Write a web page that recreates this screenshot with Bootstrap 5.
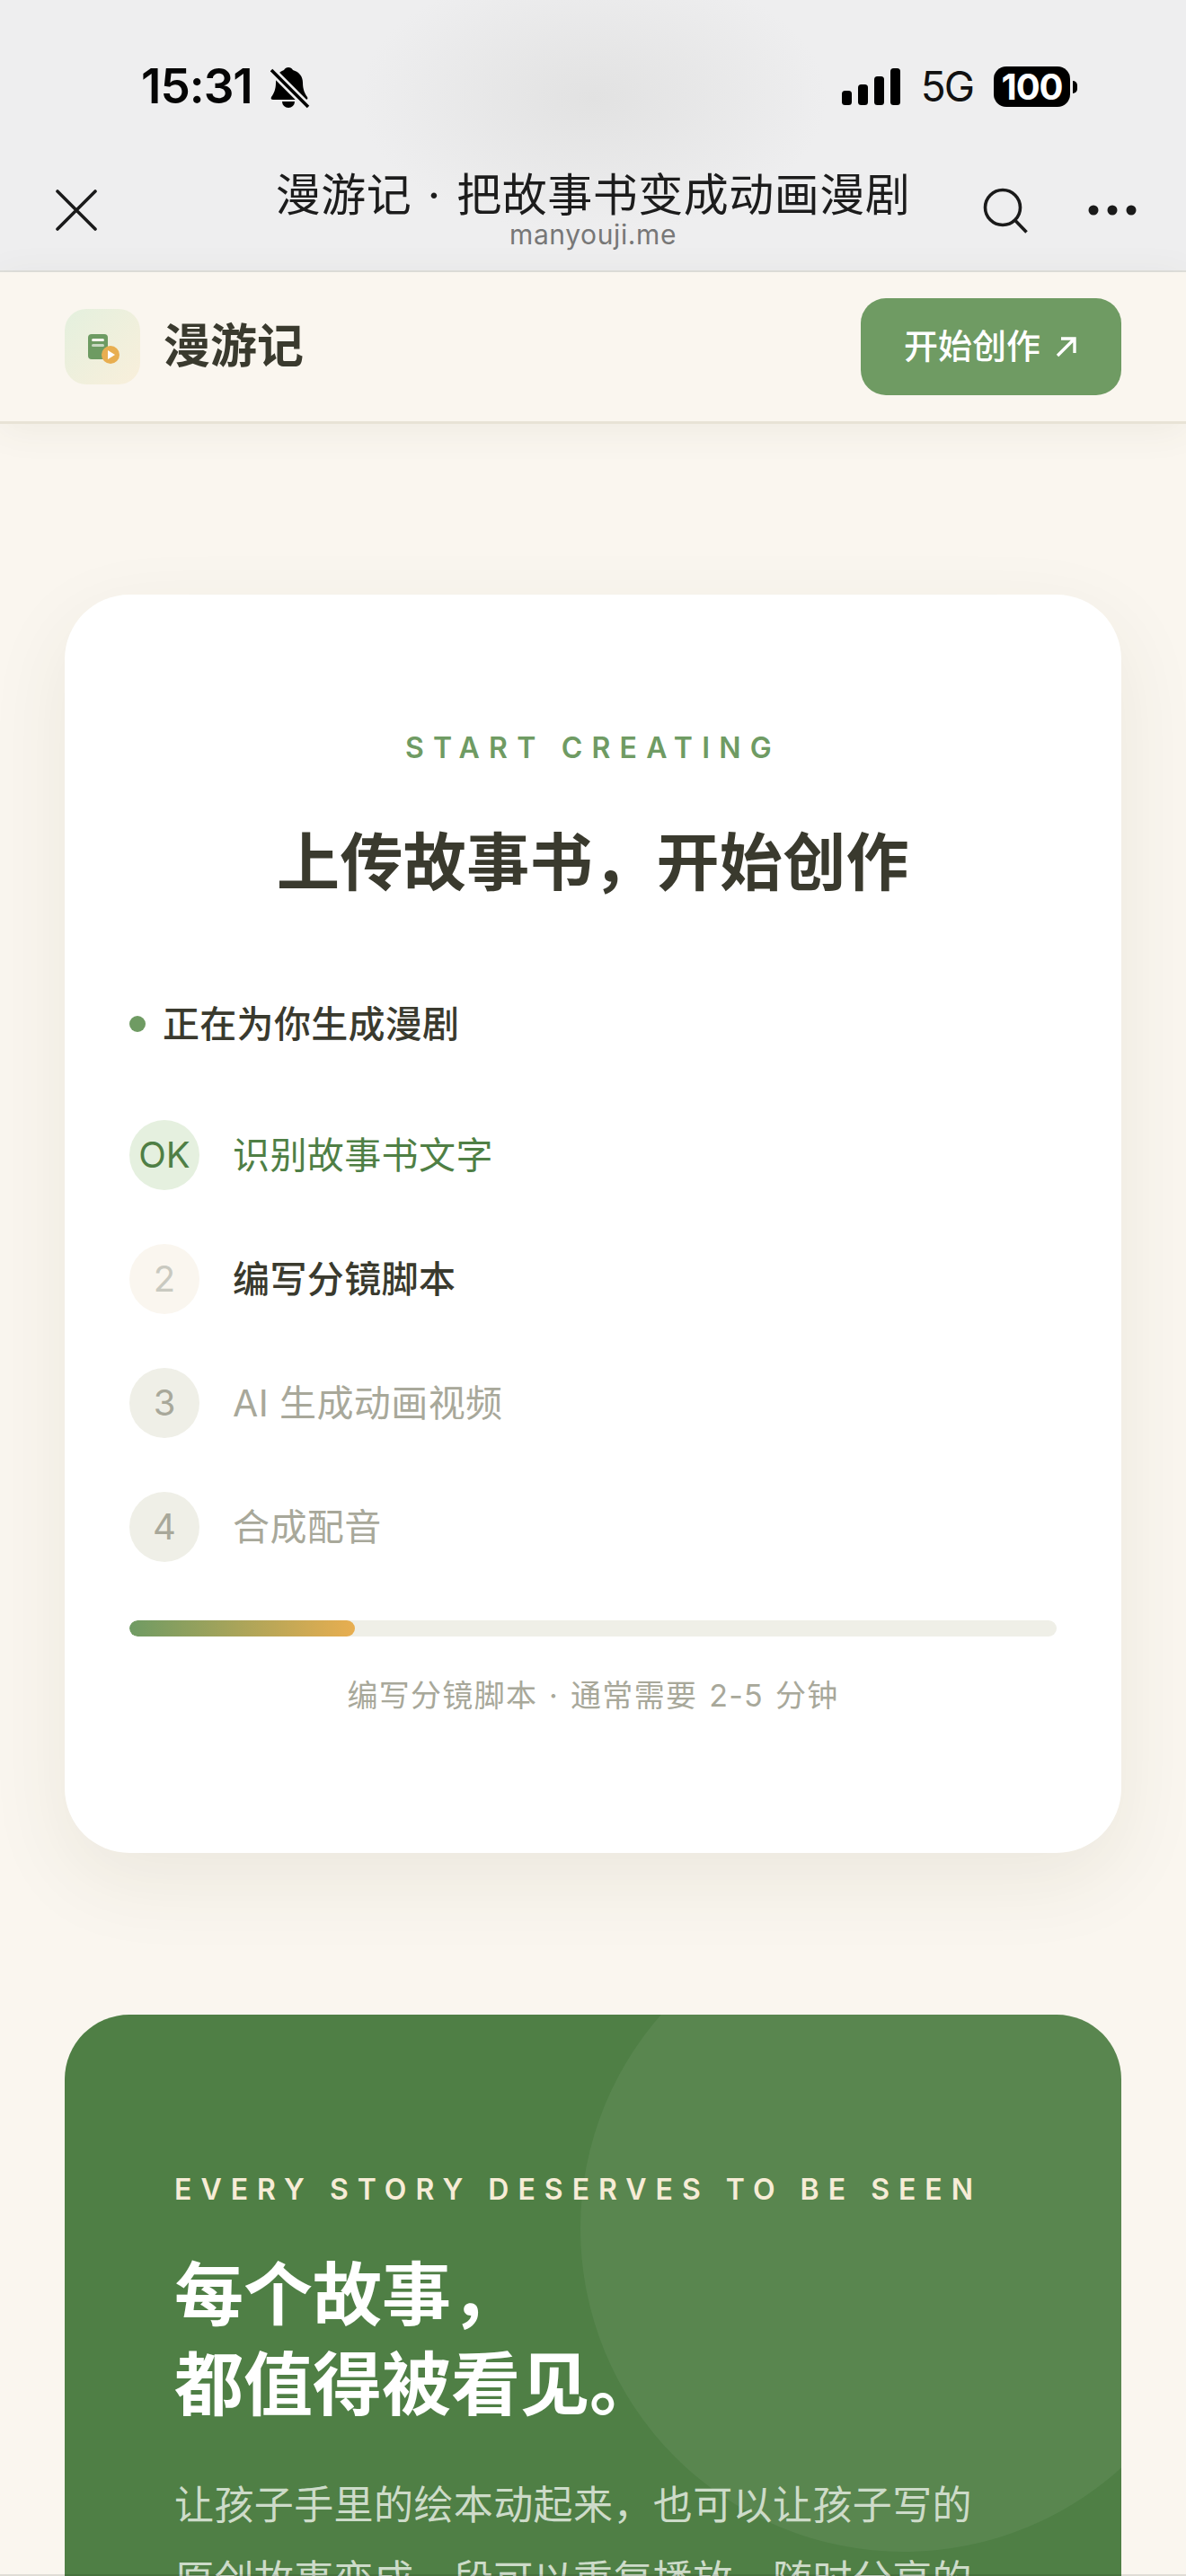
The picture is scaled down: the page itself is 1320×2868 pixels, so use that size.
<!DOCTYPE html>
<html lang="zh-CN">
<head>
    <meta charset="UTF-8"/>
    <title>漫游记</title>
    <link rel="stylesheet" href="https://cdn.jsdelivr.net/npm/bootstrap@5.3.0/dist/css/bootstrap.min.css">
    <style>
        html, body {
            height: 2868px;
            overflow: hidden;
        }

        body {
            background: #faf6ef;
            font-family: Inter, "Noto Sans CJK SC", sans-serif;
            color: #3a3a2e;
        }

        /* Phone chrome */
        .chrome-top {
            height: 303px;
            border-bottom: 2px solid #dfdfdb;
            background: radial-gradient(ellipse 260px 150px at 660px 110px, #e2e2e2, rgba(238, 238, 239, 0)), #eeeeef;
            color: #111;
        }

        .status-row {
            padding: 74px 121px 0 157px;
            height: 119px;
        }

        .status-time {
            font-size: 53px;
            font-weight: 600;
            line-height: 45px;
            letter-spacing: -1px;
            color: #050505;
        }

        .bell-icon {
            margin: 1px 0 0 20px;
        }

        .signal-icon {
            margin-top: 2px;
        }

        .status-net {
            font-size: 46px;
            line-height: 45px;
            letter-spacing: -2px;
            margin: 0 23px 0 23px;
        }

        .battery-body {
            width: 85px;
            height: 45px;
            border-radius: 14px;
            background: #000;
            color: #fff;
            font-size: 40px;
            font-weight: 700;
            line-height: 45px;
            letter-spacing: -1px;
            text-align: center;
        }

        .battery-nub {
            width: 5px;
            height: 14px;
            margin-left: 3px;
            background: #000;
            border-radius: 0 7px 7px 0;
        }

        .wx-nav {
            display: grid;
            grid-template-columns: 1fr auto 1fr;
            padding: 0 62px;
            height: 182px;
        }

        .close-icon {
            margin-top: 92px;
        }

        .wx-title {
            font-size: 50px;
            line-height: 50px;
            letter-spacing: .5px;
            word-spacing: 3px;
            margin-top: 73px;
            color: #1c1c1c;
            font-weight: 400;
        }

        .wx-domain {
            font-size: 30px;
            line-height: 36px;
            letter-spacing: .6px;
            color: #777;
            margin-top: 1px;
        }

        .wx-right {
            margin-right: -7px;
            padding-top: 90px;
            gap: 67px;
        }

        .dots-icon {
            margin-top: 19px;
        }

        /* Site header */
        .site-head {
            height: 169px;
            padding: 0 72px 1px;
            background: #faf6ef;
            border-bottom: 3px solid #e8e3d6;
            box-shadow: 0 6px 40px rgba(90, 80, 50, .07);
        }

        .logo-tile {
            width: 84px;
            height: 84px;
            border-radius: 24px;
            background: linear-gradient(135deg, #e4f0de, #f9efdb);
        }

        .brand-name {
            font-size: 52px;
            font-weight: 700;
            margin-left: 26px;
            color: #3a3a2e;
        }

        .btn-create {
            width: 290px;
            height: 108px;
            border-radius: 28px;
            background: #6f9b63;
            border: 0;
            color: #fff;
            font-size: 38px;
            font-weight: 500;
            gap: 16px;
        }

        .btn-create:hover {
            background: #6f9b63;
            color: #fff;
        }

        /* Cards */
        .page-main {
            padding: 190px 72px 0;
        }

        .panel-white {
            padding: 151px 72px;
            border: 0;
            border-radius: 72px;
            background: #fff;
            box-shadow: 0 30px 90px rgba(70, 60, 30, .08);
        }

        .eyebrow {
            font-size: 32px;
            line-height: 40px;
            letter-spacing: 10.2px;
            font-weight: 600;
            color: #6f9b63;
        }

        .panel-title {
            font-size: 70px;
            line-height: 90px;
            font-weight: 700;
            letter-spacing: .4px;
            margin: 63px 0 0;
            color: #3a3a2e;
        }

        .gen-status {
            margin-top: 106px;
            font-size: 41px;
            line-height: 56px;
            font-weight: 500;
            letter-spacing: .3px;
            gap: 19px;
        }

        .gen-dot {
            width: 18px;
            height: 18px;
            background: #6f9b63;
        }

        .step-list {
            margin-top: 79px;
            gap: 60px;
        }

        .step-row {
            gap: 37px;
            font-size: 41px;
            line-height: 78px;
            letter-spacing: .4px;
        }

        .step-num {
            width: 78px;
            height: 78px;
            font-size: 40px;
            font-weight: 400;
            text-align: center;
            line-height: 78px;
            letter-spacing: 0;
        }

        .step-done {
            color: #4f7f45;
        }

        .step-done .step-num {
            background: #e5f0df;
        }

        .step-active {
            font-weight: 500;
            color: #3a3a2e;
        }

        .step-active .step-num {
            background: #faf6ef;
            color: #c9c9c0;
        }

        .step-wait {
            color: #a8a89a;
        }

        .step-wait .step-num {
            background: #efefe7;
        }

        .gen-progress {
            height: 18px;
            margin-top: 65px;
            border-radius: 9px;
            background: #efefe7;
        }

        .gen-progress .progress-bar {
            border-radius: 9px;
            background: linear-gradient(90deg, #6f9b63, #e8ae50);
        }

        .gen-caption {
            margin-top: 42px;
            font-size: 34px;
            line-height: 48px;
            letter-spacing: 1.3px;
            word-spacing: 2px;
            color: #a8a89a;
        }

        .panel-green {
            margin-top: 180px;
            padding: 175px 166px 160px 122px;
            border: 0;
            border-radius: 72px;
            background: #4f7f45;
            overflow: hidden;
        }

        .green-circle {
            top: -122px;
            right: -118px;
            width: 720px;
            height: 720px;
            background: rgba(255, 255, 255, .06);
        }

        .green-eyebrow {
            font-size: 32px;
            line-height: 40px;
            letter-spacing: 10px;
            font-weight: 600;
            color: #f7ecd6;
            white-space: nowrap;
        }

        .green-title {
            margin: 47px 0 0;
            font-size: 77px;
            line-height: 100px;
            font-weight: 700;
            color: #fff;
        }

        .green-text {
            margin: 43px 0 0;
            font-size: 44px;
            line-height: 83px;
            letter-spacing: .4px;
            color: #cddbc9;
        }

        .screen-edge {
            bottom: 0;
            height: 2px;
            background: rgba(0, 0, 0, .1);
        }
    </style>
</head>
<body>

<!-- Status bar and in-app browser bar -->
<div class="chrome-top">
    <div class="status-row d-flex justify-content-between align-items-start">
        <div class="d-flex align-items-start">
            <span class="status-time">15:31</span>
            <svg class="bell-icon" width="44" height="46" viewBox="0 0 44 46">
                <path d="M20 0c-2 0-4 1-5 3C9 5 6 10 6 17c0 7-2 12-5 16-1 2 0 3 2 3h36c2 0 3-1 2-3-3-4-5-9-5-16C36 10 32 5 25 3 24 1 22 0 20 0z" fill="#000"/>
                <path d="M13 38h14a7 7 0 0 1-14 0z" fill="#000"/>
                <path d="M1 3l41 41" stroke="#eeeeef" stroke-width="9"/>
                <path d="M1 3l41 41" stroke="#000" stroke-width="3.5"/>
            </svg>
        </div>
        <div class="d-flex align-items-start">
            <svg class="signal-icon" width="65" height="45" viewBox="0 0 65 45" fill="#000">
                <rect x="0" y="25" width="11" height="16" rx="3.5"/>
                <rect x="18" y="18" width="11" height="23" rx="3.5"/>
                <rect x="36" y="9" width="11" height="32" rx="3.5"/>
                <rect x="54" y="0" width="11" height="41" rx="3.5"/>
            </svg>
            <span class="status-net">5G</span>
            <div class="d-flex align-items-center">
                <div class="battery-body">100</div>
                <div class="battery-nub"></div>
            </div>
        </div>
    </div>
    <div class="wx-nav">
        <div>
            <svg class="close-icon" width="46" height="46" viewBox="0 0 46 46">
                <path d="M2 2l42 42M44 2L2 44" stroke="#1a1a1a" stroke-width="3.6" stroke-linecap="round"/>
            </svg>
        </div>
        <div class="text-center">
            <div class="wx-title">漫游记 · 把故事书变成动画漫剧</div>
            <div class="wx-domain">manyouji.me</div>
        </div>
        <div class="wx-right d-flex justify-content-end align-items-start">
            <svg width="50" height="52" viewBox="0 0 50 52" fill="none" stroke="#1a1a1a" stroke-width="3.6">
                <circle cx="22" cy="22" r="19.5"/>
                <path d="M35.5 36l13 13.500"/>
            </svg>
            <svg class="dots-icon" width="54" height="12" viewBox="0 0 54 12" fill="#1a1a1a">
                <circle cx="6" cy="6" r="5.500"/>
                <circle cx="27" cy="6" r="5.500"/>
                <circle cx="48" cy="6" r="5.500"/>
            </svg>
        </div>
    </div>
</div>

<!-- Site header -->
<header class="site-head d-flex align-items-center justify-content-between">
    <div class="d-flex align-items-center">
        <div class="logo-tile d-flex align-items-center justify-content-center">
            <svg width="84" height="84" viewBox="0 0 84 84">
                <rect x="26" y="28" width="22" height="28" rx="4" fill="#6d9b62"/>
                <rect x="30" y="33" width="14" height="3" rx="1.500" fill="#f5f5ee"/>
                <rect x="30" y="39" width="14" height="3" rx="1.500" fill="#c9d8c2"/>
                <circle cx="51" cy="51" r="10" fill="#e8ae50"/>
                <path d="M48 46l8 5-8 5z" fill="#fff"/>
            </svg>
        </div>
        <span class="brand-name">漫游记</span>
    </div>
    <a class="btn btn-create d-flex align-items-center justify-content-center" href="#">
        开始创作
        <svg width="26" height="24" viewBox="0 0 26 24" fill="none" stroke="#fff" stroke-width="3.4">
            <path d="M3 22L22 3M7 3h15v16"/>
        </svg>
    </a>
</header>

<main class="page-main">
    <section class="card panel-white">
        <div class="eyebrow text-center">START CREATING</div>
        <h1 class="panel-title text-center">上传故事书&#xFF0C;开始创作</h1>

        <div class="gen-status d-flex align-items-center">
            <span class="gen-dot rounded-circle"></span>
            正在为你生成漫剧
        </div>

        <div class="step-list d-flex flex-column">
            <div class="step-row step-done d-flex">
                <span class="step-num rounded-circle">OK</span>
                <span>识别故事书文字</span>
            </div>
            <div class="step-row step-active d-flex">
                <span class="step-num rounded-circle">2</span>
                <span>编写分镜脚本</span>
            </div>
            <div class="step-row step-wait d-flex">
                <span class="step-num rounded-circle">3</span>
                <span>AI 生成动画视频</span>
            </div>
            <div class="step-row step-wait d-flex">
                <span class="step-num rounded-circle">4</span>
                <span>合成配音</span>
            </div>
        </div>

        <div class="progress gen-progress">
            <div class="progress-bar" style="width: 24.3%"></div>
        </div>
        <div class="gen-caption text-center">编写分镜脚本 · 通常需要 2-5 分钟</div>
    </section>

    <section class="card panel-green">
        <div class="green-circle position-absolute rounded-circle"></div>
        <div class="position-relative">
            <div class="green-eyebrow">EVERY STORY DESERVES TO BE SEEN</div>
            <h2 class="green-title">每个故事&#xFF0C;<br>都值得被看见&#x3002;</h2>
            <p class="green-text">让孩子手里的绘本动起来&#xFF0C;也可以让孩子写的<br>原创故事变成一段可以重复播放&#xFF0C;随时分享的</p>
        </div>
    </section>
</main>

<div class="screen-edge position-fixed start-0 end-0"></div>

</body>
</html>
